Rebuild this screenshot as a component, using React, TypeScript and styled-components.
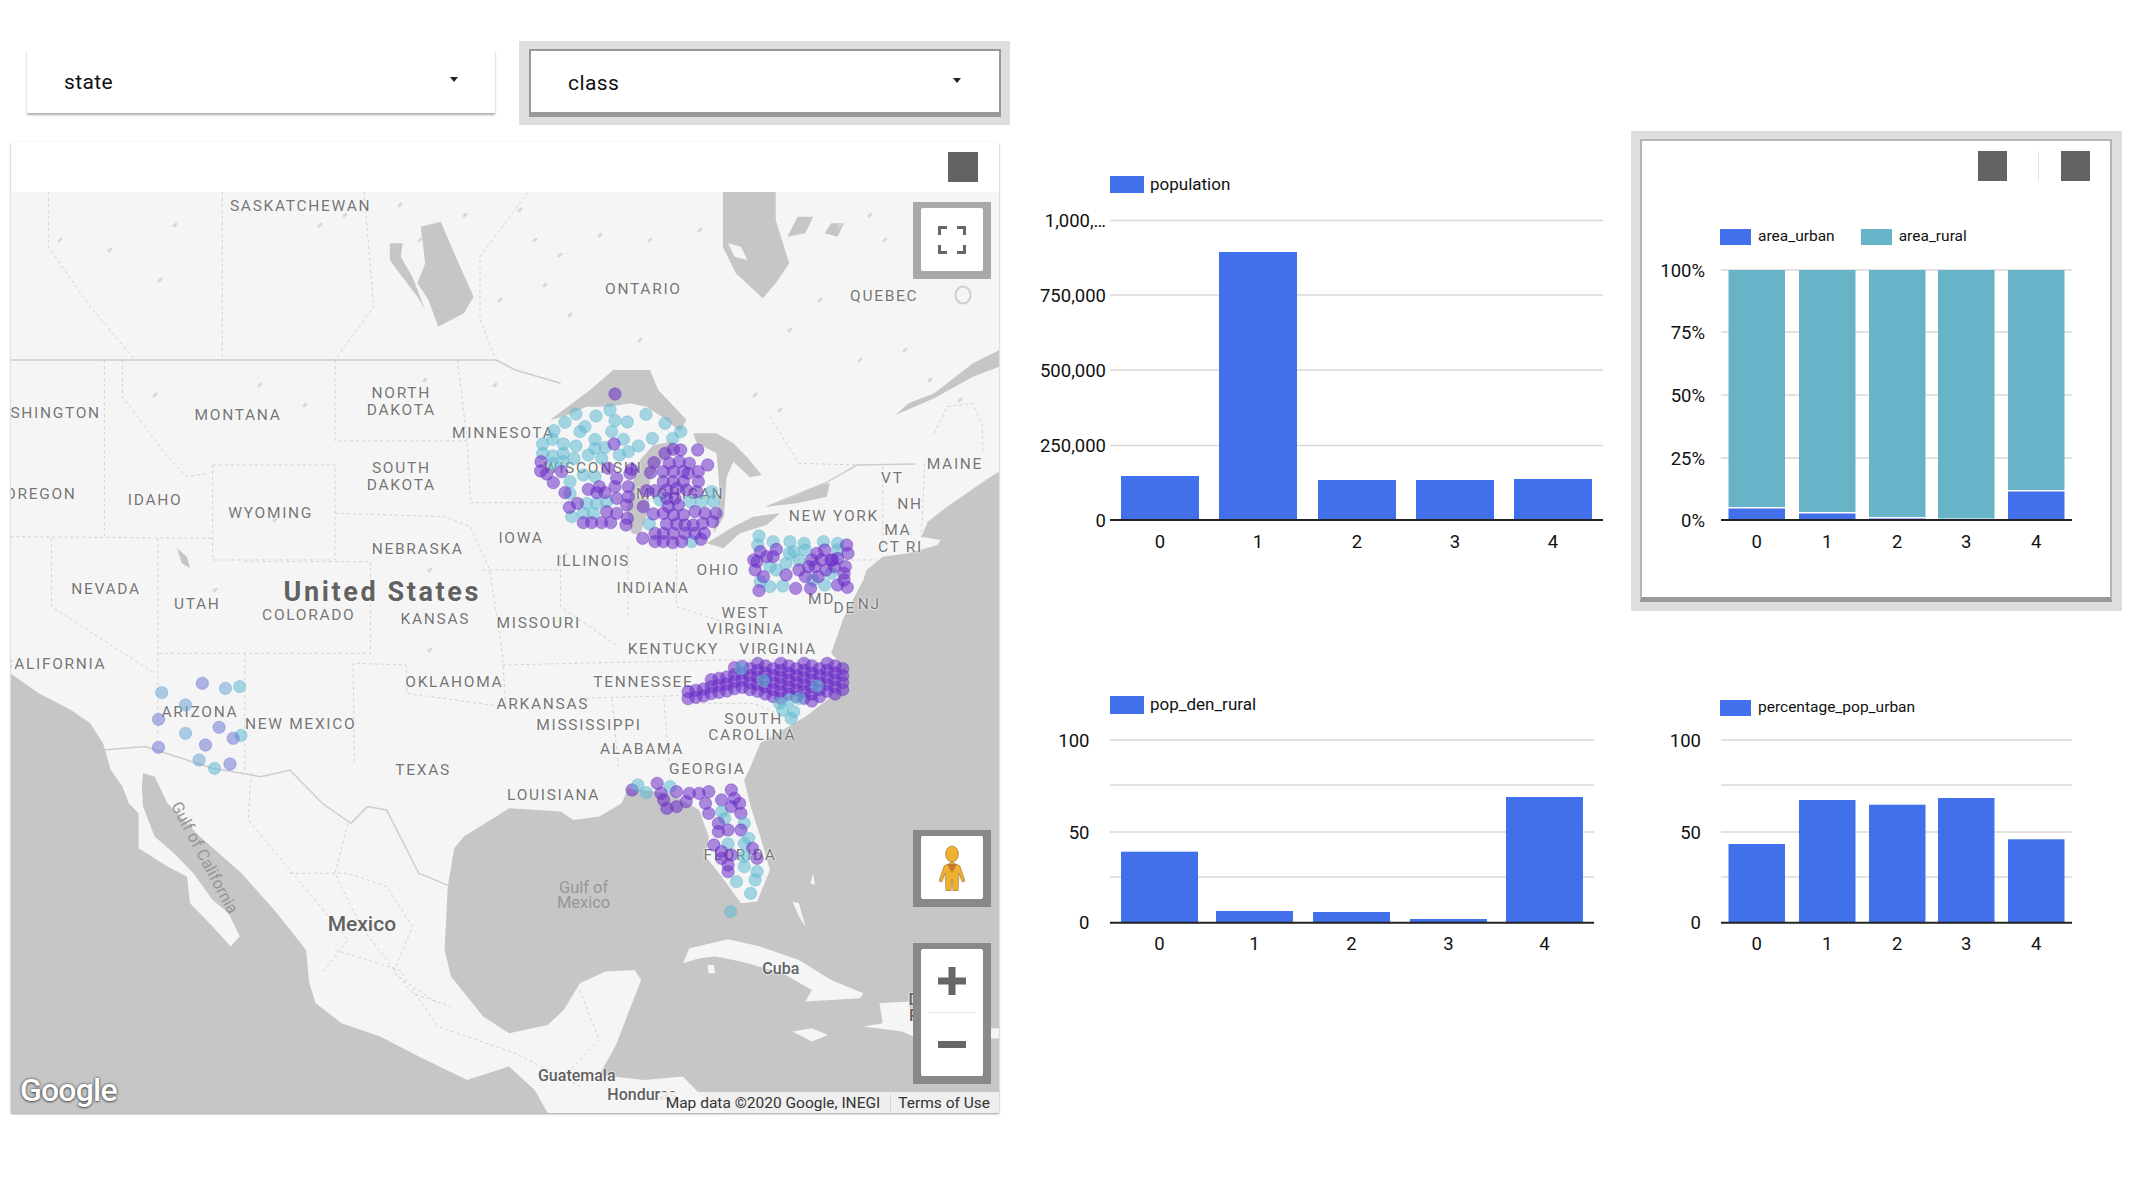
import styled, { createGlobalStyle } from "styled-components";

const GlobalStyle = createGlobalStyle`
  html, body {
    margin: 0;
    padding: 0;
    background: #fff;
    font-family: Roboto, "Liberation Sans", sans-serif;
  }
`;

const BLUE = "#4170ea";
const TEAL = "#67b4c9";
const PURPLE = "#6a2cc6";
const AQUA = "#5fb8cf";
const INDIGO = "#6d78d4";
const SKY = "#6aa6d6";
// labels were measured on the reduced screenshot
const S = 2133 / 1568;

const Page = styled.div`
  display: flex;
  width: 2133px;
  height: 1200px;
  overflow: hidden;
  background: #fff;
`;
const LeftColumn = styled.section`
  width: 1010px;
  flex: none;
`;
const Controls = styled.div`
  display: flex;
  height: 142px;
  padding: 41px 0 0 27px;
  box-sizing: border-box;
`;
const Filter = styled.div`
  display: flex;
  align-items: center;
  justify-content: space-between;
  width: 468px;
  height: 63px;
  margin-top: 9px;
  padding: 0 37px;
  box-sizing: border-box;
  background: #fff;
  box-shadow: 0 2px 2px rgba(0, 0, 0, 0.32);
  color: #111;
  font-size: 21px;
  letter-spacing: 0.4px;
`;
const FilterHalo = styled.div`
  width: 491px;
  height: 84px;
  margin-left: 24px;
  padding: 8px 9px 8px 10px;
  box-sizing: border-box;
  background: #dedede;
`;
const SelectedFilter = styled(Filter)`
  width: 472px;
  height: 68px;
  margin-top: 0;
  padding: 2px 38px 0 37px;
  border: 2px solid #999;
  border-bottom: 5px solid #999;
  box-shadow: none;
`;
const Caret = styled.span`
  width: 0;
  height: 0;
  border-left: 4.5px solid transparent;
  border-right: 4.5px solid transparent;
  border-top: 5.5px solid #222;
  margin-top: -4px;
`;
const MapCard = styled.div`
  width: 988px;
  height: 971px;
  margin-left: 11px;
  background: #fff;
  box-shadow: 0 1px 2px rgba(0, 0, 0, 0.4);
`;
const CardHeader = styled.div`
  display: flex;
  justify-content: flex-end;
  height: 50px;
  padding: 10px 21px 0 0;
  box-sizing: border-box;
`;
const ToolSquare = styled.div`
  width: 30px;
  height: 30px;
  background: #636363;
`;
const FrameSquare = styled(ToolSquare)`
  width: 29px;
`;
const MapCanvas = styled.div`
  position: relative;
  height: 921px;
  overflow: hidden;
  background: #f5f5f5;
`;
const MapLayer = styled.svg`
  position: absolute;
  inset: 0;
  width: 988px;
  height: 921px;
`;
const MapLabel = styled.span<{ $x: number; $y: number; $kind?: string; $rotate?: number }>`
  position: absolute;
  left: ${(p) => p.$x * S - 11}px;
  top: ${(p) => p.$y * S - 192}px;
  transform: translate(-50%, -50%) rotate(${(p) => p.$rotate ?? 0}deg);
  white-space: nowrap;
  font-size: ${(p) =>
    p.$kind === "country"
      ? 27
      : p.$kind === "big"
        ? 21
        : p.$kind === "city"
          ? 16
          : p.$kind === "water"
            ? 16.5
            : 15.5}px;
  font-weight: ${(p) => (p.$kind === "country" ? 700 : p.$kind && p.$kind !== "water" ? 500 : 400)};
  letter-spacing: ${(p) => (p.$kind === "country" ? 2.6 : p.$kind ? 0 : 1.7)}px;
  color: ${(p) => (p.$kind === "water" ? "#969696" : p.$kind ? "#616161" : "#757575")};
  line-height: 1;
  text-shadow: ${(p) => (p.$kind === "water" ? "none" : "0 0 2px #fff, 0 0 2px #fff")};
`;
const MapControl = styled.div<{ $top: number; $h: number; $shade: string }>`
  position: absolute;
  right: 8px;
  top: ${(p) => p.$top}px;
  width: 78px;
  height: ${(p) => p.$h}px;
  padding: 6px 8px 8px 8px;
  box-sizing: border-box;
  background: ${(p) => p.$shade};
`;
const ControlFace = styled.div`
  display: flex;
  flex-direction: column;
  align-items: center;
  justify-content: center;
  height: 100%;
  border-radius: 2px;
  background: #fff;
`;
const ZoomButton = styled.div`
  display: flex;
  flex: 1;
  align-items: center;
  justify-content: center;
  width: 100%;
`;
const ZoomDivider = styled.div`
  width: 46px;
  height: 1px;
  background: #e6e6e6;
`;
const GoogleMark = styled.span`
  position: absolute;
  left: 9px;
  bottom: 5px;
  color: #fff;
  font-size: 32px;
  font-weight: 500;
  letter-spacing: -0.8px;
  line-height: 36px;
  text-shadow: 0 0 3px rgba(0, 0, 0, 0.7), 0 1px 2px rgba(0, 0, 0, 0.4);
`;
const Attribution = styled.div`
  position: absolute;
  right: 0;
  bottom: 0;
  display: flex;
  align-items: center;
  height: 21px;
  padding: 0 9px 0 5px;
  background: rgba(245, 245, 245, 0.88);
  color: #333;
  font-size: 15.5px;
`;
const TermsLink = styled.span`
  margin-left: 10px;
  padding-left: 7px;
  border-left: 1px solid #d6d6d6;
`;
const RightColumn = styled.section`
  flex: 1;
  display: flex;
  flex-direction: column;
`;
const ChartRow = styled.div<{ $h: number; $top?: number }>`
  display: flex;
  height: ${(p) => p.$h}px;
  margin-top: ${(p) => p.$top ?? 0}px;
`;
const ChartPanel = styled.div<{ $w: number; $pad: number; $inset: number }>`
  width: ${(p) => p.$w}px;
  padding-top: ${(p) => p.$pad}px;
  padding-left: ${(p) => p.$inset}px;
  box-sizing: border-box;
`;
const Legend = styled.div<{ $gap?: number }>`
  display: flex;
  align-items: center;
  gap: ${(p) => p.$gap ?? 0}px;
  height: 17px;
`;
const LegendItem = styled.div`
  display: flex;
  align-items: center;
  gap: 7px;
  color: #111;
  font-size: 15.5px;
  line-height: 17px;
`;
const LegendBig = styled(LegendItem)`
  gap: 6px;
  font-size: 17px;
`;
const Swatch = styled.span<{ $color: string; $w: number; $h: number }>`
  width: ${(p) => p.$w}px;
  height: ${(p) => p.$h}px;
  background: ${(p) => p.$color};
`;
const HaloPanel = styled.div`
  width: 491px;
  height: 480px;
  padding: 8px 10px 9px 9px;
  box-sizing: border-box;
  background: #dedede;
`;
const FramedChart = styled.div`
  height: 463px;
  padding: 10px 20px 0 0;
  box-sizing: border-box;
  background: #fff;
  border: 2px solid #b5b5b5;
  border-bottom: 5px solid #9a9a9a;
`;
const HeaderTools = styled.div`
  display: flex;
  align-items: center;
  justify-content: flex-end;
`;
const ToolDivider = styled.div`
  width: 1px;
  height: 30px;
  margin: 0 22px 0 31px;
  background: #e4e4e4;
`;
const FramedLegend = styled(Legend)`
  margin: 47px 0 0 78px;
`;
const Plot = styled.svg<{ $w: number; $h: number; $left: number; $top: number }>`
  display: block;
  width: ${(p) => p.$w}px;
  height: ${(p) => p.$h}px;
  margin-left: ${(p) => p.$left}px;
  margin-top: ${(p) => p.$top}px;
  overflow: visible;
`;
const Tick = styled.text`
  font-family: Roboto, "Liberation Sans", sans-serif;
  font-size: 18.5px;
  fill: #111;
`;

type Bar = { x: number; w: number; top: number; rural?: number };
type ChartProps = {
  left: number;
  right: number;
  base: number;
  grid: number[];
  ticks: [string, number][];
  tickRight: number;
  bars: Bar[];
  labelY: number;
  x0: number;
  y0: number;
  w: number;
  h: number;
  mLeft: number;
  mTop: number;
};

// all chart numbers are page coordinates, the viewBox maps them back
function BarPlot({ left, right, base, grid, ticks, tickRight, bars, labelY, x0, y0, w, h, mLeft, mTop }: ChartProps) {
  return (
    <Plot $w={w} $h={h} $left={mLeft} $top={mTop} viewBox={`${x0} ${y0} ${w} ${h}`}>
      {grid.map((y) => (
        <line key={y} x1={left} x2={right} y1={y} y2={y} stroke="#d9d9d9" strokeWidth="1.5" />
      ))}
      {bars.map((b, i) => (
        <g key={i}>
          {b.rural !== undefined && (
            <rect x={b.x} width={b.w} y={b.rural} height={Math.max(b.top - b.rural - 1.5, 0)} fill={TEAL} />
          )}
          <rect x={b.x} width={b.w} y={b.top} height={base - b.top} fill={BLUE} />
          <Tick x={b.x + b.w / 2} y={labelY} textAnchor="middle">
            {i}
          </Tick>
        </g>
      ))}
      <line x1={left} x2={right} y1={base} y2={base} stroke="#222" strokeWidth="2" />
      {ticks.map(([t, y]) => (
        <Tick key={t} x={tickRight} y={y + 6.5} textAnchor="end">
          {t}
        </Tick>
      ))}
    </Plot>
  );
}

const wide1 = [1121, 1219, 1318, 1416, 1514];
const wide2 = [1121, 1216, 1313, 1410, 1506];
const narrow = [1728.5, 1799, 1869, 1938, 2008];

const popBars = [475, 251, 479, 479, 478].map((top, i) => ({ x: wide1[i], w: 78, top }));
const areaBars = [508.5, 513.5, 518.5, 520, 491.5].map((top, i) => ({
  x: narrow[i],
  w: 56.5,
  top,
  rural: 270,
}));
const denBars = [851.7, 911, 912, 919, 797].map((top, i) => ({ x: wide2[i], w: 77, top }));
const pctBars = [844, 800, 804.7, 798, 839.3].map((top, i) => ({ x: narrow[i], w: 56.5, top }));

const LOWER_GRID = [740, 785, 832, 877];
const LOWER_TICKS: [string, number][] = [
  ["100", 740],
  ["50", 832],
  ["0", 922.7],
];

const labels: { t: string; x: number; y: number; k?: string; r?: number }[] = [
  { t: "SASKATCHEWAN", x: 221, y: 152 },
  { t: "ONTARIO", x: 473, y: 213 },
  { t: "QUEBEC", x: 650, y: 218 },
  { t: "WASHINGTON", x: 31, y: 304 },
  { t: "MONTANA", x: 175, y: 306 },
  { t: "NORTH", x: 295, y: 290 },
  { t: "DAKOTA", x: 295, y: 302 },
  { t: "MINNESOTA", x: 370, y: 319 },
  { t: "SOUTH", x: 295, y: 345 },
  { t: "DAKOTA", x: 295, y: 357 },
  { t: "OREGON", x: 30, y: 364 },
  { t: "IDAHO", x: 114, y: 368 },
  { t: "WYOMING", x: 199, y: 378 },
  { t: "NEBRASKA", x: 307, y: 404 },
  { t: "IOWA", x: 383, y: 396 },
  { t: "ILLINOIS", x: 436, y: 413 },
  { t: "WISCONSIN", x: 436, y: 345 },
  { t: "MICHIGAN", x: 500, y: 364 },
  { t: "NEW YORK", x: 613, y: 380 },
  { t: "VT", x: 656, y: 352 },
  { t: "NH", x: 669, y: 371 },
  { t: "MA", x: 660, y: 390 },
  { t: "CT RI", x: 662, y: 403 },
  { t: "MAINE", x: 702, y: 342 },
  { t: "OHIO", x: 528, y: 420 },
  { t: "INDIANA", x: 480, y: 433 },
  { t: "NEVADA", x: 78, y: 434 },
  { t: "UTAH", x: 145, y: 445 },
  { t: "United States", x: 281, y: 435, k: "country" },
  { t: "COLORADO", x: 227, y: 453 },
  { t: "KANSAS", x: 320, y: 456 },
  { t: "MISSOURI", x: 396, y: 459 },
  { t: "WEST", x: 548, y: 451 },
  { t: "VIRGINIA", x: 548, y: 463 },
  { t: "MD", x: 604, y: 441 },
  { t: "DE", x: 621, y: 448 },
  { t: "NJ", x: 639, y: 445 },
  { t: "KENTUCKY", x: 495, y: 478 },
  { t: "VIRGINIA", x: 572, y: 478 },
  { t: "CALIFORNIA", x: 40, y: 489 },
  { t: "OKLAHOMA", x: 334, y: 502 },
  { t: "TENNESSEE", x: 473, y: 502 },
  { t: "ARKANSAS", x: 399, y: 518 },
  { t: "ARIZONA", x: 147, y: 524 },
  { t: "NEW MEXICO", x: 221, y: 533 },
  { t: "MISSISSIPPI", x: 433, y: 534 },
  { t: "SOUTH", x: 554, y: 529 },
  { t: "CAROLINA", x: 553, y: 541 },
  { t: "ALABAMA", x: 472, y: 551 },
  { t: "TEXAS", x: 311, y: 567 },
  { t: "GEORGIA", x: 520, y: 566 },
  { t: "LOUISIANA", x: 407, y: 585 },
  { t: "FLORIDA", x: 544, y: 629 },
  { t: "Gulf of", x: 429, y: 653, k: "water" },
  { t: "Mexico", x: 429, y: 664, k: "water" },
  { t: "Gulf of California", x: 150, y: 631, k: "water", r: 62 },
  { t: "Mexico", x: 266, y: 679, k: "big" },
  { t: "Cuba", x: 574, y: 712, k: "city" },
  { t: "Guatemala", x: 424, y: 791, k: "city" },
  { t: "Honduras", x: 472, y: 805, k: "city" },
  { t: "Dominican", x: 696, y: 735, k: "city" },
  { t: "Rep.", x: 680, y: 747, k: "city" },
];

// outlines are in a stretched space: x * 1.552, (y - 340) * 3 of the page
const GEO_TRANSFORM = "translate(0 340) scale(0.6443 0.3333)";

const PACIFIC =
  "16,1000 60,1060 90,1090 110,1110 140,1150 160,1210 172,1290 190,1340 200,1390 215,1420 215,1525 260,1580 290,1610 295,1690 330,1760 358,1820 372,1790 355,1720 330,1680 300,1600 270,1540 240,1490 222,1400 220,1340 222,1300 240,1310 260,1390 310,1490 375,1600 430,1720 475,1830 480,1930 490,1990 530,2050 590,2090 650,2150 725,2220 790,2180 830,2250 850,2319 16,2319";
const ATLANTIC =
  "1130,2319 1090,2270 1060,2210 1000,2220 930,2205 955,2120 965,2070 995,1920 985,1890 940,1895 900,1930 875,2010 850,2055 790,2080 750,2030 700,1910 690,1830 695,1640 705,1525 720,1490 770,1430 790,1405 870,1415 890,1440 930,1430 965,1390 975,1345 1040,1360 1085,1410 1100,1490 1095,1550 1120,1610 1150,1690 1175,1685 1195,1590 1180,1490 1165,1400 1155,1320 1165,1280 1180,1210 1250,1130 1310,1040 1300,960 1290,940 1310,830 1340,720 1345,690 1370,650 1410,640 1455,615 1460,600 1430,590 1440,545 1470,500 1530,420 1551,395 1551,2319";
const ISLANDS = [
  "1060,1870 1070,1825 1130,1798 1180,1820 1240,1860 1290,1920 1340,1960 1335,1975 1250,1985 1260,1950 1215,1900 1150,1865 1110,1850 1085,1855",
  "1340,2060 1370,2050 1365,1990 1410,1985 1420,2070 1551,2065 1551,2095 1430,2100 1400,2075",
  "1230,2075 1260,2065 1285,2085 1260,2105 1245,2090",
  "1230,1685 1240,1690 1250,1760 1240,1730",
  "1262,1600 1265,1635 1258,1630",
  "1098,1875 1108,1875 1110,1900 1100,1900",
];
const LAKES = [
  // James Bay, with the island drawn after it
  "1122,-444 1204,-444 1204,-360 1225,-230 1204,-170 1184,-125 1142,-200 1122,-280",
  // Winnipeg and Manitoba
  "653,-340 684,-355 705,-260 735,-130 720,-80 680,-40 665,-120 648,-170 660,-230",
  "605,-290 625,-290 622,-250 640,-190 660,-90 648,-130 620,-200 605,-240",
  // St Lawrence
  "1551,30 1510,70 1450,160 1410,190 1390,225 1450,175 1510,110 1551,80",
  // Nipigon and small ones
  "1238,-370 1262,-370 1250,-320 1222,-310",
  "1290,-350 1310,-350 1300,-310 1280,-320",
  // Utah lake
  "275,625 290,650 295,685 282,670",
];
// Great Lakes are taken from a plain 3x crop
const GREAT_LAKES = [
  "90,150 130,120 210,60 280,0 390,0 415,60 500,150 480,185 440,150 380,110 330,100 270,110 200,110 130,140",
  "455,215 400,225 360,270 340,330 320,420 335,490 360,495 385,420 390,330 430,270 470,240",
  "520,190 590,190 640,220 680,260 725,315 690,322 640,275 620,320 612,440 580,490 600,380 590,250 530,220",
  "560,520 640,470 700,440 780,430 740,465 660,490 610,535",
  "740,410 820,380 900,345 930,340 920,380 830,400",
];
// scattered ponds of the northern part, page coordinates
const PONDS: [number, number][] = [
  [60, 240], [110, 250], [160, 280], [175, 225], [320, 225], [345, 215], [400, 205], [420, 240], [465, 215], [520, 210], [535, 240], [560, 255], [600, 235], [650, 240], [620, 290], [570, 315], [545, 285], [500, 300], [700, 230], [840, 225], [870, 215], [885, 240], [905, 300], [930, 255], [820, 300], [790, 330], [860, 360], [905, 350], [930, 380], [960, 400], [155, 395], [260, 385], [305, 405], [425, 380], [495, 385], [780, 410], [755, 395], [640, 340], [275, 520], [215, 590], [430, 570], [430, 650], [565, 555],
];
const BORDERS = [
  "16,60 770,60 800,90 870,130",
  "1190,500 1280,430 1330,375 1420,372",
  "160,1230 225,1220 330,1285 405,1310 450,1290 500,1390 545,1450 570,1400 600,1410 650,1600 700,1640",
];
const STATE_LINES = [
  "162,60 162,590",
  "190,60 190,170 260,350 290,410 325,400",
  "520,60 520,303 725,303",
  "710,60 725,303 730,480",
  "520,520 690,530 730,560 760,690 780,945 785,1100",
  "330,375 520,375 520,660 330,660 330,375",
  "380,665 575,665 575,940 245,940",
  "16,590 330,595",
  "80,595 80,800 240,1000",
  "245,595 245,1190",
  "380,940 380,1290",
  "550,1265 548,970 630,975 632,1060 780,1100",
  "730,488 900,488",
  "750,690 870,690",
  "870,650 870,800 960,920",
  "975,620 975,830",
  "1050,620 1050,800 1130,850",
  "780,975 1130,960 1310,960",
  "900,1075 1090,1065",
  "950,1075 960,1290",
  "1030,1075 1040,1290",
  "1080,1090 1170,1090 1230,1140",
  "1200,660 1360,660",
  "1370,380 1370,620",
  "1435,370 1430,600",
  "1195,230 1240,370 1330,375",
  "1450,280 1470,200 1510,190 1525,260 1525,340",
  "345,-444 345,60",
  "565,-444 580,-100 520,60",
  "75,-444 75,-280 140,-100 210,60",
  "820,-444 745,-250 745,-60 770,60",
  "390,1300 385,1440 450,1590 540,1800 500,1900",
  "540,1450 520,1600 560,1760 640,1960 700,2000",
  "450,1600 540,1600 600,1640 640,1760 610,1900 680,1990",
  "520,1830 620,1890 680,2060 800,2140 900,2240",
  "900,1950 930,2100 880,2200",
];

type Dot = [number, number, string];
const fromZoom = (pts: [number, number, number?][]): Dot[] =>
  pts.map(([x, y, c]) => [520 + x / 3 - 11, 370 + y / 3 - 192, c ? PURPLE : AQUA]);
const fromGeo = (pts: [number, number, number?][], shift = 0): Dot[] =>
  pts.map(([x, y, c]) => [x * 0.6443 - 11, 340 + (y + shift) / 3 - 192, c ? PURPLE : AQUA]);

const lakesDots = fromZoom([
  [270,120],[168,132],[228,138],[135,157],[285,152],[322,156],[378,133],[435,160],[102,182],[195,170],[180,185],[275,185],[482,185],[397,205],[458,205],[225,208],[310,208],[68,222],[98,208],[130,222],[168,228],[225,235],[255,232],[355,228],[68,250],[98,258],[130,250],[205,255],[245,265],[298,255],[325,245],[130,275],[162,265],[98,280],[150,335],[190,315],[225,320],[150,370],[155,440],[200,400],[230,400],[260,395],[190,430],[220,430],[388,462],[420,390],[510,395],[545,395],[575,365],[580,395],[515,515],
  [285,72,1],[282,222,1],[63,275,1],[62,303,1],[80,312,1],[125,305,1],[100,338,1],[265,295,1],[335,298,1],[135,368,1],[205,358,1],[238,350,1],[230,368,1],[290,325,1],[330,310,1],[325,350,1],[285,350,1],[255,368,1],[290,385,1],[325,380,1],[148,412,1],[172,400,1],[260,425,1],[290,430,1],[320,405,1],[322,445,1],[190,458,1],[215,458,1],[245,458,1],[272,458,1],[318,465,1],
  [435,250,1],[460,238,1],[482,240,1],[533,240,1],[402,278,1],[448,280,1],[478,275,1],[508,280,1],[563,285,1],[392,308,1],[430,305,1],[460,305,1],[490,305,1],[505,310,1],[535,305,1],[430,335,1],[460,335,1],[490,335,1],[535,335,1],[380,362,1],[405,362,1],[440,360,1],[470,355,1],[500,360,1],[530,365,1],[370,410,1],[440,385,1],[465,385,1],[445,410,1],[475,405,1],[400,432,1],[430,430,1],[460,435,1],[490,435,1],[525,425,1],[555,430,1],[588,430,1],[440,462,1],[470,462,1],[495,465,1],[520,465,1],[548,460,1],[578,455,1],[405,490,1],[430,490,1],[460,490,1],[495,490,1],[525,490,1],[553,490,1],[368,505,1],[405,515,1],[430,515,1],[458,518,1],[485,515,1],[543,508,1],
]);
const paDots = fromGeo([
  [1178,588],[1176,615],[1200,605],[1226,605],[1248,610],[1278,605],[1300,610],[1232,635],[1220,670],[1195,680],[1290,700],[1180,725],[1195,740],[1215,738],[1280,735],[1250,630],[1205,690],[1225,640],[1240,660],[1262,720],[1300,630],
  [1314,615,1],[1180,635,1],[1205,628,1],[1280,630,1],[1316,640,1],[1175,665,1],[1190,650,1],[1260,660,1],[1290,660,1],[1312,680,1],[1172,690,1],[1240,690,1],[1265,680,1],[1310,700,1],[1185,710,1],[1220,705,1],[1250,710,1],[1270,710,1],[1310,720,1],[1235,745,1],[1258,745,1],[1300,735,1],[1315,742,1],[1178,752,1],[1292,660,1],[1275,660,1],[1255,680,1],[1300,655,1],[1268,640,1],[1282,690,1],[1170,660,1],[1200,650,1],[1295,680,1],
]);
// the Carolina band is dense enough for a staggered grid
const carolina: [number, number, number?][] = [];
for (let x = 1068, i = 0; x < 1312; x += 12, i++) {
  const t = Math.min((x - 1068) / 85, 1);
  const top = 1055 - 85 * t;
  const bottom = x < 1150 ? 1082 - 25 * t : x < 1250 ? 1060 + (x - 1150) * 0.3 : 1090 - (x - 1250) * 0.5;
  for (let y = top + ((i * 7) % 3) * 8; y <= bottom; y += 21) carolina.push([x, y, 1]);
}
const ncDots = fromGeo([
  ...carolina,
  [1185,1022],[1268,1038],[1210,1090],[1225,1080],[1240,1075],[1215,1110],[1232,1115],[1228,1135],[1150,985],
]);
const flDots = fromGeo([
  [981,60,1],[990,45],[1003,68],[1020,40,1],[1040,50],[1026,70,1],[1030,90,1],[1050,65,1],[1070,70,1],[1085,70,1],[1100,65,1],[1135,60,1],[1120,90,1],[1140,85,1],[1095,100,1],[1035,115,1],[1050,110,1],[1065,95,1],[1100,130,1],[1120,125],[1135,110,1],[1148,100,1],[1150,130,1],[1125,145],[1155,160],[1115,160,1],[1115,185,1],[1130,180,1],[1150,180,1],[1162,205],[1130,222],[1155,220],[1108,225,1],[1168,235,1],[1120,245,1],[1120,265,1],[1135,255,1],[1155,260],[1175,265,1],[1155,290],[1130,285,1],[1130,305,1],[1175,305],[1143,335],[1172,330],[1165,370],[1134,425],
], 1290);
const azDots: Dot[] = fromGeo([
  [314,1030],[350,1045],[372,1040],[251,1058],[288,1095],[246,1138],[340,1162],[288,1180],[374,1186],[362,1195],[319,1215],[246,1222],[309,1260],[357,1272],[333,1285],
]).map(([x, y], i) => [x, y, [INDIGO, SKY, AQUA, SKY, SKY, INDIGO, INDIGO, SKY, AQUA, INDIGO, INDIGO, INDIGO, SKY, INDIGO, AQUA][i]]);
const allDots = [...lakesDots, ...paDots, ...ncDots, ...flDots, ...azDots];

function App() {
  return (
    <>
      <GlobalStyle />
      <Page data-testid="app">
        <LeftColumn>
          <Controls>
            <Filter>
              state
              <Caret />
            </Filter>
            <FilterHalo>
              <SelectedFilter>
                class
                <Caret />
              </SelectedFilter>
            </FilterHalo>
          </Controls>
          <MapCard>
            <CardHeader>
              <ToolSquare />
            </CardHeader>
            <MapCanvas>
              <MapLayer viewBox="11 192 988 921">
                <g transform={GEO_TRANSFORM}>
                  {STATE_LINES.map((p) => (
                    <polyline key={p} points={p} fill="none" stroke="#d2d2d2" strokeWidth="1" strokeDasharray="3 3" vectorEffect="non-scaling-stroke" />
                  ))}
                  {BORDERS.map((p) => (
                    <polyline key={p} points={p} fill="none" stroke="#cdcdcd" strokeWidth="1.5" vectorEffect="non-scaling-stroke" />
                  ))}
                  <polygon points={PACIFIC} fill="#c6c6c6" />
                  <polygon points={ATLANTIC} fill="#c6c6c6" />
                  {LAKES.map((p) => (
                    <polygon key={p} points={p} fill="#c6c6c6" />
                  ))}
                  <polygon points="1130,-290 1150,-280 1160,-240 1140,-250" fill="#f5f5f5" />
                  {ISLANDS.map((p) => (
                    <polygon key={p} points={p} fill="#f5f5f5" />
                  ))}
                </g>
                <g transform="translate(520 370) scale(0.3333)">
                  {GREAT_LAKES.map((p) => (
                    <polygon key={p} points={p} fill="#c6c6c6" />
                  ))}
                </g>
                {PONDS.map(([x, y]) => (
                  <ellipse key={`${x}-${y}`} cx={x} cy={y} rx="3" ry="1.5" fill="#d8d8d8" transform={`rotate(-40 ${x} ${y})`} />
                ))}
                <ellipse cx="963" cy="295" rx="7.5" ry="8.5" fill="none" stroke="#cfcfcf" strokeWidth="2" />
              </MapLayer>
              {labels.map((l, i) => (
                <MapLabel key={i} $x={l.x} $y={l.y} $kind={l.k} $rotate={l.r}>
                  {l.t}
                </MapLabel>
              ))}
              <MapLayer viewBox="0 0 988 921">
                {allDots.map(([x, y, c], i) => (
                  <circle key={i} cx={x} cy={y} r="6.2" fill={c} fillOpacity="0.55" stroke={c} strokeOpacity="0.4" strokeWidth="1" />
                ))}
              </MapLayer>
              <MapControl $top={10} $h={77} $shade="#a9a9a9">
                <ControlFace>
                  <svg width="28" height="28" viewBox="0 0 28 28" fill="none" stroke="#666" strokeWidth="3">
                    <path d="M1.5 9V1.5H9M19 1.5h7.5V9M26.5 19v7.5H19M9 26.5H1.5V19" />
                  </svg>
                </ControlFace>
              </MapControl>
              <MapControl $top={638} $h={77} $shade="#898989">
                <ControlFace>
                  <svg width="28" height="46" viewBox="0 0 28 46">
                    <path d="M14 17l8 4 5 15-3 1-3-9-1 18h-5l-1-12-1 12H8L7 28l-3 9-3-1 5-15z" fill="#eeb02e" stroke="#8c7a55" strokeWidth="0.6" />
                    <ellipse cx="14" cy="9" rx="6.5" ry="8" fill="#eeb02e" stroke="#8c7a55" strokeWidth="0.6" />
                    <path d="M9 19h10l-5 9z" fill="#c9772f" />
                  </svg>
                </ControlFace>
              </MapControl>
              <MapControl $top={751} $h={141} $shade="#898989">
                <ControlFace>
                  <ZoomButton>
                    <svg width="28" height="28" viewBox="0 0 28 28" fill="#666">
                      <path d="M10.5 0h7v10.5H28v7H17.5V28h-7V17.5H0v-7h10.500z" />
                    </svg>
                  </ZoomButton>
                  <ZoomDivider />
                  <ZoomButton>
                    <svg width="28" height="7" viewBox="0 0 28 7" fill="#666">
                      <rect width="28" height="7" />
                    </svg>
                  </ZoomButton>
                </ControlFace>
              </MapControl>
              <GoogleMark>Google</GoogleMark>
              <Attribution>
                Map data ©2020 Google, INEGI
                <TermsLink>Terms of Use</TermsLink>
              </Attribution>
            </MapCanvas>
          </MapCard>
        </LeftColumn>
        <RightColumn>
          <ChartRow $h={480} $top={131}>
            <ChartPanel $w={621} $pad={45} $inset={100}>
              <Legend>
                <LegendBig>
                  <Swatch $color={BLUE} $w={34} $h={17} />
                  population
                </LegendBig>
              </Legend>
              <BarPlot
                x0={1010} y0={200} w={610} h={360} mLeft={-100} mTop={8}
                left={1110} right={1603} base={519}
                grid={[219.5, 294, 369, 444.5]}
                ticks={[["1,000,…", 219.5], ["750,000", 294], ["500,000", 369], ["250,000", 444.5], ["0", 519]]}
                tickRight={1106} bars={popBars} labelY={547}
              />
            </ChartPanel>
            <HaloPanel>
              <FramedChart>
                <HeaderTools>
                  <FrameSquare />
                  <ToolDivider />
                  <FrameSquare />
                </HeaderTools>
                <FramedLegend $gap={26}>
                  <LegendItem>
                    <Swatch $color={BLUE} $w={31} $h={16} />
                    area_urban
                  </LegendItem>
                  <LegendItem>
                    <Swatch $color={TEAL} $w={31} $h={16} />
                    area_rural
                  </LegendItem>
                </FramedLegend>
                <BarPlot
                  x0={1642} y0={250} w={440} h={310} mLeft={0} mTop={5}
                  left={1721} right={2072} base={520}
                  grid={[270, 332, 395, 458]}
                  ticks={[["100%", 270], ["75%", 332], ["50%", 395], ["25%", 458], ["0%", 520]]}
                  tickRight={1705} bars={areaBars} labelY={548}
                />
              </FramedChart>
            </HaloPanel>
          </ChartRow>
          <ChartRow $h={340}>
            <ChartPanel $w={630} $pad={85} $inset={100}>
              <Legend>
                <LegendBig>
                  <Swatch $color={BLUE} $w={34} $h={18} />
                  pop_den_rural
                </LegendBig>
              </Legend>
              <BarPlot
                x0={1010} y0={725} w={610} h={235} mLeft={-100} mTop={12}
                left={1110} right={1594} base={922.7}
                grid={LOWER_GRID} ticks={LOWER_TICKS}
                tickRight={1089.5} bars={denBars} labelY={950}
              />
            </ChartPanel>
            <ChartPanel $w={483} $pad={88} $inset={80}>
              <Legend>
                <LegendItem>
                  <Swatch $color={BLUE} $w={31} $h={16} />
                  percentage_pop_urban
                </LegendItem>
              </Legend>
              <BarPlot
                x0={1640} y0={725} w={440} h={235} mLeft={-80} mTop={9}
                left={1721} right={2072} base={922.7}
                grid={LOWER_GRID} ticks={LOWER_TICKS}
                tickRight={1701} bars={pctBars} labelY={950}
              />
            </ChartPanel>
          </ChartRow>
        </RightColumn>
      </Page>
    </>
  );
}

export default App;
